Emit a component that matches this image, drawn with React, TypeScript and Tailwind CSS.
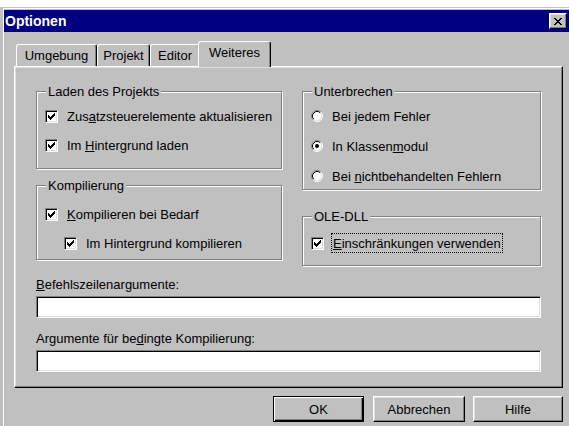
import type { ReactNode } from "react";

// bevel presets, classic 3D look
const raised =
  "border border-t-white border-l-white border-r-black border-b-black shadow-[inset_-1px_-1px_#808080,inset_1px_1px_#dfdfdf]";
const sunken =
  "border border-t-[#808080] border-l-[#808080] border-r-white border-b-white shadow-[inset_1px_1px_#000,inset_-1px_-1px_#dfdfdf]";

// pixel glyphs as runs per row: [from, to]
const checkRuns = [
  [[6, 6]],
  [[5, 6]],
  [[0, 0], [4, 6]],
  [[0, 1], [3, 5]],
  [[0, 4]],
  [[1, 3]],
  [[2, 2]],
];

const closeRuns = [
  [[0, 1], [6, 7]],
  [[1, 2], [5, 6]],
  [[2, 5]],
  [[3, 4]],
  [[2, 5]],
  [[1, 2], [5, 6]],
  [[0, 1], [6, 7]],
];

function PixelGlyph({ runs, w, h }: { runs: number[][][]; w: number; h: number }) {
  return (
    <svg width={w} height={h} viewBox={`0 0 ${w} ${h}`} shapeRendering="crispEdges">
      {runs.map((row, y) =>
        row.map(([a, b]) => <rect key={`${y}-${a}`} x={a} y={y} width={b - a + 1} height={1} fill="#000" />)
      )}
    </svg>
  );
}

function CheckBox() {
  return (
    <span className={`flex h-[13px] w-[13px] shrink-0 items-center justify-center bg-white ${sunken}`}>
      <PixelGlyph runs={checkRuns} w={7} h={7} />
    </span>
  );
}

function Radio({ on = false }: { on?: boolean }) {
  return (
    <svg width="12" height="12" viewBox="0 0 12 12" className="shrink-0">
      <circle cx="6" cy="6" r="5" fill="#fff" />
      <path d="M2.11 9.89A5.5 5.5 0 0 1 9.89 2.11" fill="none" stroke="#808080" />
      <path d="M9.89 2.11A5.5 5.5 0 0 1 2.11 9.89" fill="none" stroke="#fff" />
      <path d="M2.82 9.18A4.5 4.5 0 0 1 9.18 2.82" fill="none" stroke="#000" />
      <path d="M9.18 2.82A4.5 4.5 0 0 1 2.82 9.18" fill="none" stroke="#dfdfdf" />
      {on && <circle cx="6" cy="6" r="2" fill="#000" />}
    </svg>
  );
}

function Group({ title, className = "", children }: { title: string; className?: string; children: ReactNode }) {
  return (
    <fieldset className={`border border-[#808080] shadow-[inset_1px_1px_#fff,1px_1px_#fff] ${className}`}>
      <legend className="ml-[9px] bg-[#c0c0c0] px-[2px] leading-[15px]">{title}</legend>
      {children}
    </fieldset>
  );
}

function CheckRow({ children, className = "" }: { children: ReactNode; className?: string }) {
  return (
    <div className={`flex h-[16px] items-center gap-[9px] ${className}`}>
      <CheckBox />
      <span>{children}</span>
    </div>
  );
}

function RadioRow({ on, children }: { on?: boolean; children: ReactNode }) {
  return (
    <div className="flex h-[16px] items-center gap-[9px]">
      <Radio on={on} />
      <span>{children}</span>
    </div>
  );
}

const tabs = [
  { label: "Umgebung", cls: "w-[81px]" },
  { label: "Projekt", cls: "w-[53px]" },
  { label: "Editor", cls: "w-[50px]" },
];

export default function App() {
  return (
    <div className="h-[426px] w-[569px] overflow-hidden bg-white pt-[7px] font-['Liberation_Sans',Arial,sans-serif] text-[13px] leading-[15px] text-black">
      <div className="h-[440px] w-[572px] bg-[#c0c0c0] pl-[4px] pr-[3px] pt-[3px] shadow-[inset_3px_1px_#c0c0c0,inset_4px_2px_#fff]">
        {/* title bar */}
        <div className="flex h-[22px] items-center justify-between bg-[#000080] pl-[1px] pr-[2px]">
          <span className="text-[14px] font-bold text-white">Optionen</span>
          <button className={`flex h-[16px] w-[18px] items-center justify-center bg-[#c0c0c0] ${raised}`}>
            <PixelGlyph runs={closeRuns} w={8} h={7} />
          </button>
        </div>

        {/* tab strip */}
        <div className="ml-[12px] mt-[9px] flex h-[25px] items-end">
          {tabs.map((t) => (
            <div
              key={t.label}
              className={`flex h-[22px] items-center justify-center rounded-t-[3px] border-l border-r border-t border-l-white border-r-black border-t-white shadow-[inset_-1px_0_#808080] ${t.cls}`}
            >
              {t.label}
            </div>
          ))}
          <div className="relative z-10 -mb-px -ml-[2px] flex h-[26px] w-[73px] items-start justify-center rounded-t-[3px] border-l border-r border-t border-l-white border-r-black border-t-white bg-[#c0c0c0] pt-[3px] shadow-[inset_-1px_0_#808080]">
            Weiteres
          </div>
        </div>

        {/* tab page */}
        <div className={`ml-[10px] h-[322px] w-[549px] px-[21px] pt-[17px] ${raised}`}>
          <div className="flex gap-[20px]">
            <div className="flex w-[246px] flex-col">
              <Group title="Laden des Projekts">
                <div className="flex flex-col gap-[13px] pb-[15px] pl-[8px] pt-[9px]">
                  <CheckRow>
                    Zus<u>a</u>tzsteuerelemente aktualisieren
                  </CheckRow>
                  <CheckRow>
                    Im <u>H</u>intergrund laden
                  </CheckRow>
                </div>
              </Group>
              <Group title="Kompilierung" className="mt-[9px]">
                <div className="flex flex-col gap-[13px] pb-[8px] pl-[8px] pt-[13px]">
                  <CheckRow>
                    <u>K</u>ompilieren bei Bedarf
                  </CheckRow>
                  <CheckRow className="pl-[19px]">Im Hintergrund kompilieren</CheckRow>
                </div>
              </Group>
            </div>

            <div className="flex w-[239px] flex-col">
              <Group title="Unterbrechen">
                <div className="flex flex-col gap-[14px] pb-[5px] pl-[8px] pt-[9px]">
                  <RadioRow>Bei jedem Fehler</RadioRow>
                  <RadioRow on>
                    In Klassen<u>m</u>odul
                  </RadioRow>
                  <RadioRow>
                    Bei <u>n</u>ichtbehandelten Fehlern
                  </RadioRow>
                </div>
              </Group>
              <Group title="OLE-DLL" className="mt-[19px]">
                <div className="flex pb-[12px] pl-[8px] pt-[9px]">
                  <div className="flex h-[20px] items-center">
                    <CheckBox />
                    <span className="ml-[7px] flex h-[20px] items-center border border-dotted border-black px-[1px]">
                      <u>E</u>inschränkungen verwenden
                    </span>
                  </div>
                </div>
              </Group>
            </div>
          </div>

          <div className="mt-[11px]">
            <u>B</u>efehlszeilenargumente:
          </div>
          <div className={`mt-[4px] h-[22px] bg-white ${sunken}`} />
          <div className="mt-[13px]">
            Argumente für be<u>d</u>ingte Kompilierung:
          </div>
          <div className={`mt-[4px] h-[22px] bg-white ${sunken}`} />
        </div>

        {/* dialog buttons */}
        <div className="ml-[10px] mt-[8px] flex w-[549px] justify-end">
          <button className="mr-[9px] flex h-[26px] w-[91px] items-center justify-center border border-black bg-[#c0c0c0] shadow-[inset_1px_1px_#fff,inset_-1px_-1px_#000,inset_-2px_-2px_#808080]">
            OK
          </button>
          <button className={`mr-[8px] flex h-[26px] w-[92px] items-center justify-center bg-[#c0c0c0] ${raised}`}>
            Abbrechen
          </button>
          <button className={`flex h-[26px] w-[90px] items-center justify-center bg-[#c0c0c0] ${raised}`}>
            Hilfe
          </button>
        </div>
      </div>
    </div>
  );
}
